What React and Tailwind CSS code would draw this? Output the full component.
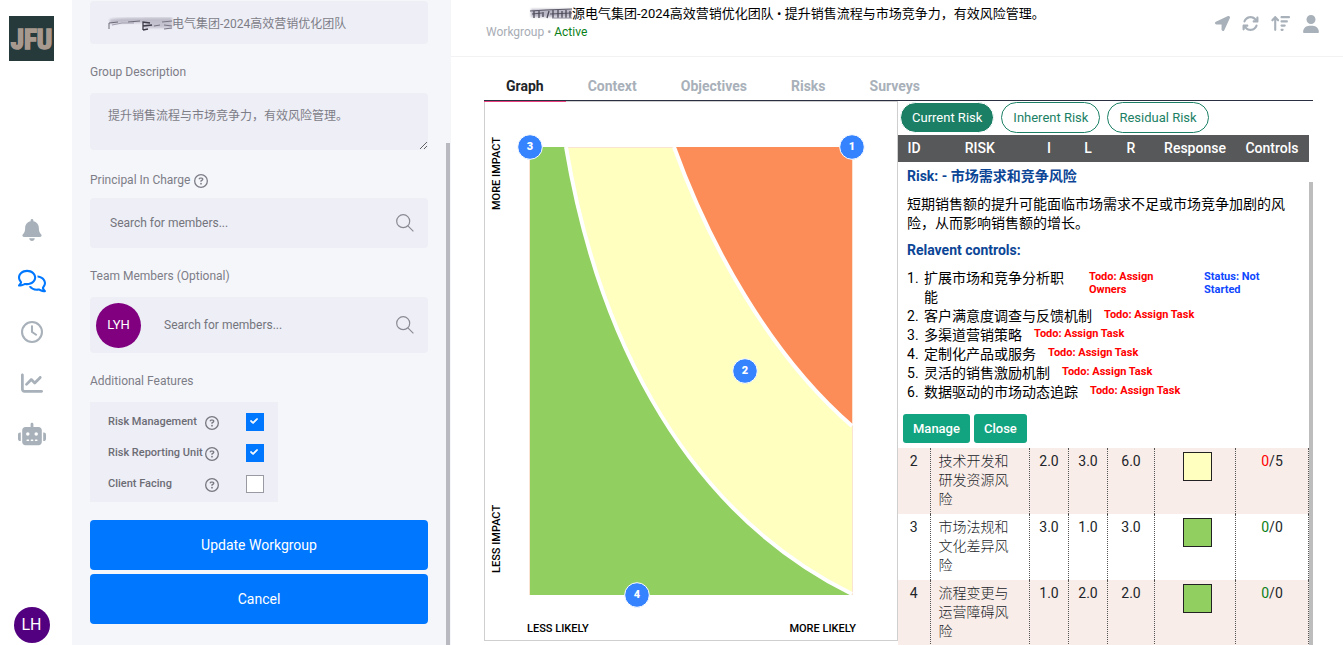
import React, { useState } from 'react';
import { FaLocationArrow } from 'react-icons/fa';
import {
    FaArrowUpWideShort,
    FaArrowsRotate,
    FaBell,
    FaChartLine,
    FaCheck,
    FaRegCircleQuestion,
    FaRegClock,
    FaRegComments,
    FaRobot,
    FaUser,
} from 'react-icons/fa6';

const NAV_ITEMS = [
    { label: 'Notifications', icon: <FaBell size={22} /> },
    { label: 'Workgroups', icon: <FaRegComments size={28} />, active: true },
    { label: 'History', icon: <FaRegClock size={22} /> },
    { label: 'Reports', icon: <FaChartLine size={22} /> },
    { label: 'Assistant', icon: <FaRobot size={28} /> },
];

const FEATURES = [
    { id: 'risk-management', label: 'Risk Management', checked: true },
    { id: 'risk-reporting', label: 'Risk Reporting Unit', checked: true },
    { id: 'client-facing', label: 'Client Facing', checked: false },
];

const TABS = ['Graph', 'Context', 'Objectives', 'Risks', 'Surveys'];

const RISK_VIEWS = ['Current Risk', 'Inherent Risk', 'Residual Risk'];

const CONTROLS = [
    { name: '扩展市场和竞争分析职能', todo: 'Todo: Assign Owners', status: 'Status: Not Started' },
    { name: '客户满意度调查与反馈机制', todo: 'Todo: Assign Task' },
    { name: '多渠道营销策略', todo: 'Todo: Assign Task' },
    { name: '定制化产品或服务', todo: 'Todo: Assign Task' },
    { name: '灵活的销售激励机制', todo: 'Todo: Assign Task' },
    { name: '数据驱动的市场动态追踪', todo: 'Todo: Assign Task' },
];

const RISKS = [
    { id: 2, name: '技术开发和研发资源风险', i: '2.0', l: '3.0', r: '6.0', color: 'bg-[#ffffbf]', done: 0, total: 5 },
    { id: 3, name: '市场法规和文化差异风险', i: '3.0', l: '1.0', r: '3.0', color: 'bg-[#91cf60]', done: 0, total: 0 },
    { id: 4, name: '流程变更与运营障碍风险', i: '1.0', l: '2.0', r: '2.0', color: 'bg-[#91cf60]', done: 0, total: 0 },
];

const PINS = [
    { id: 3, x: 46, y: 47 },
    { id: 1, x: 368, y: 47 },
    { id: 2, x: 261, y: 271 },
    { id: 4, x: 153, y: 495 },
];

const SearchIcon = () => (
    <svg width="18" height="18" viewBox="0 0 18 18" fill="none" stroke="#8a8a94" strokeWidth="1.2" aria-hidden="true">
        <circle cx="7.2" cy="7.2" r="6.5" />
        <path d="M11.9 11.9 17.4 17.4" />
    </svg>
);

const Sidebar = () => (
    <aside className="flex w-[72px] shrink-0 flex-col items-center bg-white pt-4 pr-[9px] pb-[2px]">
        <svg width="45" height="45" viewBox="0 0 45 45" role="img" aria-label="JFU">
            <rect width="45" height="45" fill="#263a3c" />
            <text
                x="22.5"
                y="33"
                textAnchor="middle"
                fontSize="27"
                fontWeight="700"
                fontFamily="'Liberation Sans Narrow', 'Roboto Condensed', Roboto, sans-serif"
                fill="#a8998f"
                stroke="#a8998f"
                strokeWidth="1.6"
            >
                JFU
            </text>
        </svg>
        <nav className="mt-[143px] flex flex-col">
            {NAV_ITEMS.map((item) => (
                <a
                    key={item.label}
                    href="#"
                    aria-label={item.label}
                    className={`flex h-[51px] items-center justify-center ${item.active ? 'text-[#0077ff]' : 'text-[#a8b0b9]'}`}
                >
                    {item.icon}
                </a>
            ))}
        </nav>
        <button type="button" className="mt-auto flex size-9 items-center justify-center rounded-full bg-[#530080] text-base text-white">
            LH
        </button>
    </aside>
);

const FeatureRow = ({ feature }) => {
    const [checked, setChecked] = useState(feature.checked);

    return (
        <div className="flex h-[18px] items-center">
            <label htmlFor={feature.id} className="w-[97px] text-[11px] font-medium whitespace-nowrap text-[#6c6c74]">
                {feature.label}
            </label>
            <FaRegCircleQuestion size={14} className="mt-px text-[#77777f]" />
            <span className="ml-auto grid size-[18px] place-items-center">
                <input
                    id={feature.id}
                    type="checkbox"
                    checked={checked}
                    onChange={(e) => setChecked(e.target.checked)}
                    className="col-start-1 row-start-1 size-[18px] appearance-none border border-[#9a9aa2] bg-white checked:border-[#0077ff] checked:bg-[#0077ff]"
                />
                {checked && (
                    <FaCheck size={8} strokeWidth={60} className="pointer-events-none z-10 col-start-1 row-start-1 mr-[2px] mb-[2px] stroke-white text-white" />
                )}
            </span>
        </div>
    );
};

const WorkgroupForm = () => (
    <section className="flex w-[379px] shrink-0 overflow-hidden bg-[#f5f6fa] pr-px">
        <form className="flex-1 px-[18px] pt-px text-xs text-[#7d7d87]" onSubmit={(e) => e.preventDefault()}>
            <div className="relative">
                <input
                    aria-label="Group Name"
                    defaultValue="电气集团-2024高效营销优化团队"
                    className="block h-[43px] w-full rounded bg-[#edeef6] pr-4 pl-[82px]"
                />
                {/* Scribbled out part of the name */}
                <svg className="absolute top-4 left-[18px]" width="66" height="16" viewBox="0 0 66 16" fill="none" aria-hidden="true">
                    <g className="blur-[1px]">
                        <path d="M2 5 C14 2 26 4 38 3 L64 3" stroke="#bfbdca" strokeWidth="5" />
                        <path d="M36 8H64" stroke="#c4c2ce" strokeWidth="6" />
                    </g>
                    <path d="M1 12V6 L10 5 M20 5 L32 4" stroke="#6d6a78" />
                    <path d="M4 8 L14 6 26 6" stroke="#a19eae" />
                    <path d="M35 13V5 L42 6 M35 9 L44 8 M35 13 L40 12" stroke="#3f3c49" strokeWidth="1.3" />
                    <path d="M46 9 L52 8 M56 8 L64 9 M54 5 L64 4 M56 12 L64 11" stroke="#777484" />
                </svg>
            </div>

            <label htmlFor="description" className="mt-[19px] mb-3 block leading-[18px]">Group Description</label>
            <textarea
                id="description"
                defaultValue="提升销售流程与市场竞争力，有效风险管理。"
                className="block h-[57px] w-full resize-y rounded bg-[#edeef6] px-[18px] py-[14px] leading-[18px]"
            />

            <div className="mt-5 mb-[7px] flex items-center gap-1">
                <label htmlFor="principal" className="leading-[21px]">Principal In Charge</label>
                <FaRegCircleQuestion size={14} />
            </div>
            <div className="flex h-[50px] items-center rounded bg-[#edeef6] pr-[14px] pl-5">
                <input id="principal" placeholder="Search for members..." className="min-w-0 flex-1 placeholder:text-[#74747c]" />
                <SearchIcon />
            </div>

            <label htmlFor="members" className="mt-[19px] mb-3 block leading-[18px]">Team Members (Optional)</label>
            <div className="flex h-14 items-center rounded bg-[#edeef6] pr-[14px] pl-[6px]">
                <span className="flex size-[45px] items-center justify-center rounded-full bg-[#800080] text-[13px] text-white">LYH</span>
                <input id="members" placeholder="Search for members..." className="ml-[23px] min-w-0 flex-1 placeholder:text-[#74747c]" />
                <SearchIcon />
            </div>

            <fieldset>
                <legend className="pt-[19px] pb-3 leading-[18px]">Additional Features</legend>
                <div className="flex w-[188px] flex-col gap-[13px] bg-[#edeef6] pt-[11px] pr-[14px] pb-[9px] pl-[18px]">
                    {FEATURES.map((feature) => (
                        <FeatureRow key={feature.id} feature={feature} />
                    ))}
                </div>
            </fieldset>

            <div className="mt-[18px] flex flex-col gap-1 text-sm text-white">
                <button type="submit" className="h-[50px] rounded bg-[#0077ff]">Update Workgroup</button>
                <button type="button" className="h-[50px] rounded bg-[#0077ff]">Cancel</button>
            </div>
        </form>
        <div className="mt-[143px] w-1 bg-[#b9bac1]" />
    </section>
);

const Header = () => (
    <header className="flex h-[57px] items-start justify-between border-b border-[#f2f2f4] pr-[23px] pl-[35px]">
        <div className="pt-1">
            <h1 className="flex items-center text-[13px] leading-[19px] whitespace-nowrap text-black">
                <svg width="86" height="16" viewBox="0 0 86 16" fill="none" aria-hidden="true">
                    <path d="M45 7H86" stroke="#bab7c6" strokeWidth="8" className="blur-[1px]" />
                    <path d="M44 5 L60 4 86 3 M46 8 L56 7 M64 8 L86 7" stroke="#5a5766" />
                    <path d="M48 5V12 M53 5V12 M57 6V11 M63 5 L61 12 M67 4V12 M72 4V12 M76 5V12 M80 4V12 M84 5V12" stroke="#4d4a58" strokeWidth="1.3" />
                    <path d="M66 12H86" stroke="#8d8a98" />
                </svg>
                源电气集团-2024高效营销优化团队 • 提升销售流程与市场竞争力，有效风险管理。
            </h1>
            <p className="text-xs leading-[18px] text-[#a8adb5]">
                Workgroup • <span className="text-[#0b8018]">Active</span>
            </p>
        </div>
        <div className="flex items-center gap-3 pt-[14px] text-[#a8b0b9]">
            <button type="button" aria-label="Locate"><FaLocationArrow size={15} /></button>
            <button type="button" aria-label="Refresh"><FaArrowsRotate size={17} /></button>
            <button type="button" aria-label="Sort"><FaArrowUpWideShort size={19} /></button>
            <button type="button" aria-label="Profile"><FaUser size={18} /></button>
        </div>
    </header>
);

const RiskGraph = () => (
    <div className="min-w-0 flex-1 self-start border border-[#cfcfcf]">
        <svg className="block w-full" viewBox="1 2 412 538" fontFamily="Roboto, sans-serif" role="img" aria-label="Risk graph">
            <rect x="45.5" y="47.5" width="323" height="447" fill="#ffffbf" stroke="#fbe3d2" />
            <path d="M82 47 C110 214 187 404 368 495 H46 V47 Z" fill="#91cf60" />
            <path d="M190 47 C225 144 285 254 368 326 V47 Z" fill="#fc8d59" />
            <path d="M82 47 C110 214 187 404 368 494" stroke="#fff" strokeWidth="4" fill="none" />
            <path d="M190 47 C225 144 285 254 368 326" stroke="#fff" strokeWidth="4" fill="none" />
            {PINS.map((pin) => (
                <g key={pin.id}>
                    <circle cx={pin.x} cy={pin.y} r="12.3" fill="#3583ff" stroke="#fff" />
                    <text x={pin.x} y={pin.y + 3} textAnchor="middle" fontSize="11" fontWeight="900" fill="#fff">{pin.id}</text>
                </g>
            ))}
            <g fontSize="11" fontWeight="500" fill="#000">
                <text x="43" y="532">LESS LIKELY</text>
                <text x="372" y="532" textAnchor="end">MORE LIKELY</text>
                <text transform="translate(16 110) rotate(-90)">MORE IMPACT</text>
                <text transform="translate(16 473) rotate(-90)">LESS IMPACT</text>
            </g>
        </svg>
    </div>
);

const RiskDetails = () => (
    <div className="pt-[5px] pb-[5px] pl-[9px] text-left leading-[19px] text-black">
        <h2 className="font-bold text-[#0b4596]">Risk: - 市场需求和竞争风险</h2>
        <p className="mt-[9px] pr-3">短期销售额的提升可能面临市场需求不足或市场竞争加剧的风险，从而影响销售额的增长。</p>
        <h2 className="mt-2 font-bold text-[#0b4596]">Relavent controls:</h2>
        <ol className="mt-[9px]">
            {CONTROLS.map((control, index) => (
                <li key={control.name} className="flex">
                    <span className="w-[17px] shrink-0">{index + 1}.</span>
                    <span className={control.status ? 'w-[150px]' : ''}>{control.name}</span>
                    <span className={`pt-px text-[11px] leading-[13px] font-bold text-[#ff0000] ${control.status ? 'ml-[15px] w-[90px]' : 'ml-3'}`}>
                        {control.todo}
                    </span>
                    {control.status && (
                        <span className="ml-[25px] w-[70px] pt-px text-[11px] leading-[13px] font-bold text-[#0f47ff]">{control.status}</span>
                    )}
                </li>
            ))}
        </ol>
        <div className="mt-3 -ml-1 flex gap-1 text-[13px] font-medium text-white">
            <button type="button" className="h-[29px] rounded-[3px] bg-[#12a480] px-[10px]">Manage</button>
            <button type="button" className="h-[29px] rounded-[3px] bg-[#12a480] px-[10px]">Close</button>
        </div>
    </div>
);

const RiskTable = () => (
    <div className="flex">
        <table className="min-w-0 flex-1 table-fixed border-collapse text-center text-sm leading-[19px] text-[#212529]">
            <colgroup>
                <col className="w-8" />
                <col />
                <col className="w-[39px]" />
                <col className="w-[39px]" />
                <col className="w-[47px]" />
                <col className="w-[81px]" />
                <col className="w-[73px]" />
            </colgroup>
            <thead>
                <tr className="h-[27px] bg-[#575859] text-white">
                    {['ID', 'RISK', 'I', 'L', 'R', 'Response', 'Controls'].map((head) => (
                        <th key={head} className="p-0 font-medium">{head}</th>
                    ))}
                </tr>
            </thead>
            <tbody>
                <tr>
                    <td colSpan="7" className="p-0"><RiskDetails /></td>
                </tr>
                {RISKS.map((risk) => (
                    <tr
                        key={risk.id}
                        className="h-[66px] align-top odd:bg-white even:bg-[#f9ede9] [&>td]:border-r [&>td]:border-dotted [&>td]:border-[#555] [&>td]:pt-1"
                    >
                        <td>{risk.id}</td>
                        <td className="pr-[10px] pl-2 text-left font-light">{risk.name}</td>
                        <td>{risk.i}</td>
                        <td>{risk.l}</td>
                        <td>{risk.r}</td>
                        <td className="pl-1">
                            <div className={`mx-auto size-[29px] border border-[#222] ${risk.color}`} />
                        </td>
                        <td>
                            <span className={risk.total > risk.done ? 'text-[#ff0000]' : 'text-[#0b8018]'}>{risk.done}</span>/{risk.total}
                        </td>
                    </tr>
                ))}
            </tbody>
        </table>
        <div className="mt-[47px] w-1 shrink-0 bg-[#bdbdbd]" />
    </div>
);

export default function App() {
    const [tab, setTab] = useState('Graph');
    const [view, setView] = useState('Current Risk');

    return (
        <div className="flex h-screen overflow-hidden bg-white font-[Roboto,'Noto_Sans_CJK_SC',sans-serif]">
            <Sidebar />
            <WorkgroupForm />
            <main className="min-w-0 flex-1">
                <Header />
                <div className="pr-[30px] pl-[33px]">
                    <nav className="flex border-b border-[#2b2f42] pt-[19px]">
                        {TABS.map((name) => (
                            <button
                                key={name}
                                type="button"
                                onClick={() => setTab(name)}
                                className={`relative px-[22px] pb-1 text-sm font-bold ${
                                    tab === name
                                        ? 'text-[#212529] after:absolute after:inset-x-0 after:-bottom-[2px] after:z-10 after:h-px after:bg-[#e83e7c]'
                                        : 'text-[#a8b0b9]'
                                }`}
                            >
                                {name}
                            </button>
                        ))}
                    </nav>
                    <div className="flex">
                        <RiskGraph />
                        <div className="w-[415px] shrink-0">
                            <div className="flex gap-[7px] pt-px pb-[2px] pl-[2px]">
                                {RISK_VIEWS.map((name) => (
                                    <button
                                        key={name}
                                        type="button"
                                        onClick={() => setView(name)}
                                        className={`h-[31px] rounded-full border px-[11px] text-[13px] ${
                                            view === name ? 'border-white bg-[#1b7f65] text-white' : 'border-[#1b7f65] text-[#1b7f65]'
                                        }`}
                                    >
                                        {name}
                                    </button>
                                ))}
                            </div>
                            <RiskTable />
                        </div>
                    </div>
                </div>
            </main>
        </div>
    );
}
